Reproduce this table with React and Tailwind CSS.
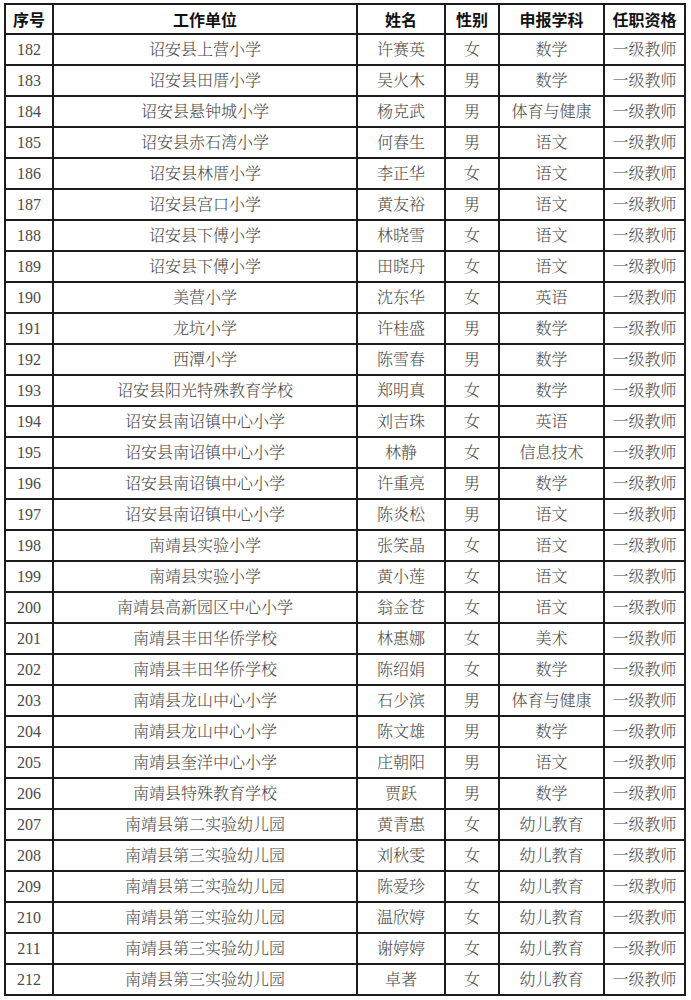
import React from "react";

const rows = [
  ["182", "诏安县上营小学", "许赛英", "女", "数学", "一级教师"],
  ["183", "诏安县田厝小学", "吴火木", "男", "数学", "一级教师"],
  ["184", "诏安县悬钟城小学", "杨克武", "男", "体育与健康", "一级教师"],
  ["185", "诏安县赤石湾小学", "何春生", "男", "语文", "一级教师"],
  ["186", "诏安县林厝小学", "李正华", "女", "语文", "一级教师"],
  ["187", "诏安县宫口小学", "黄友裕", "男", "语文", "一级教师"],
  ["188", "诏安县下傅小学", "林晓雪", "女", "语文", "一级教师"],
  ["189", "诏安县下傅小学", "田晓丹", "女", "语文", "一级教师"],
  ["190", "美营小学", "沈东华", "女", "英语", "一级教师"],
  ["191", "龙坑小学", "许桂盛", "男", "数学", "一级教师"],
  ["192", "西潭小学", "陈雪春", "男", "数学", "一级教师"],
  ["193", "诏安县阳光特殊教育学校", "郑明真", "女", "数学", "一级教师"],
  ["194", "诏安县南诏镇中心小学", "刘吉珠", "女", "英语", "一级教师"],
  ["195", "诏安县南诏镇中心小学", "林静", "女", "信息技术", "一级教师"],
  ["196", "诏安县南诏镇中心小学", "许重亮", "男", "数学", "一级教师"],
  ["197", "诏安县南诏镇中心小学", "陈炎松", "男", "语文", "一级教师"],
  ["198", "南靖县实验小学", "张笑晶", "女", "语文", "一级教师"],
  ["199", "南靖县实验小学", "黄小莲", "女", "语文", "一级教师"],
  ["200", "南靖县高新园区中心小学", "翁金苍", "女", "语文", "一级教师"],
  ["201", "南靖县丰田华侨学校", "林惠娜", "女", "美术", "一级教师"],
  ["202", "南靖县丰田华侨学校", "陈绍娟", "女", "数学", "一级教师"],
  ["203", "南靖县龙山中心小学", "石少滨", "男", "体育与健康", "一级教师"],
  ["204", "南靖县龙山中心小学", "陈文雄", "男", "数学", "一级教师"],
  ["205", "南靖县奎洋中心小学", "庄朝阳", "男", "语文", "一级教师"],
  ["206", "南靖县特殊教育学校", "贾跃", "男", "数学", "一级教师"],
  ["207", "南靖县第二实验幼儿园", "黄青惠", "女", "幼儿教育", "一级教师"],
  ["208", "南靖县第三实验幼儿园", "刘秋雯", "女", "幼儿教育", "一级教师"],
  ["209", "南靖县第三实验幼儿园", "陈爱珍", "女", "幼儿教育", "一级教师"],
  ["210", "南靖县第三实验幼儿园", "温欣婷", "女", "幼儿教育", "一级教师"],
  ["211", "南靖县第三实验幼儿园", "谢婷婷", "女", "幼儿教育", "一级教师"],
  ["212", "南靖县第三实验幼儿园", "卓著", "女", "幼儿教育", "一级教师"],
];

const headers = ["序号", "工作单位", "姓名", "性别", "申报学科", "任职资格"];
const widths = ["w-[48px]", "w-[304px]", "w-[88px]", "w-[54px]", "w-[105px]", "w-[81px]"];

const bodyFont = {
  fontFamily: '"Liberation Serif", "Noto Serif CJK SC", "Noto Sans CJK SC", serif',
};

export default function App() {
  return (
    <div className="w-[691px] h-[1000px] bg-white pt-[3px] pl-[4px]">
      <div className="inline-flex flex-col border-l-2 border-t-2 border-[#1c1c1c]">
        <div className="flex h-[30px]">
          {headers.map((h, i) => (
            <div
              key={i}
              className={`${widths[i]} shrink-0 h-full flex items-center justify-center border-r-2 border-b-2 border-[#1c1c1c] text-[16px] font-bold text-[#111] font-['Noto_Sans_CJK_SC',sans-serif]`}
            >
              {h}
            </div>
          ))}
        </div>
        {rows.map((r, ri) => (
          <div key={ri} className="flex h-[31px]">
            {r.map((c, i) => (
              <div
                key={i}
                style={bodyFont}
                className={`${widths[i]} shrink-0 h-full flex items-center justify-center border-r-2 border-b-2 border-[#1c1c1c] text-[16px] font-light text-[#4a4a4a] whitespace-nowrap`}
              >
                {c}
              </div>
            ))}
          </div>
        ))}
      </div>
    </div>
  );
}
